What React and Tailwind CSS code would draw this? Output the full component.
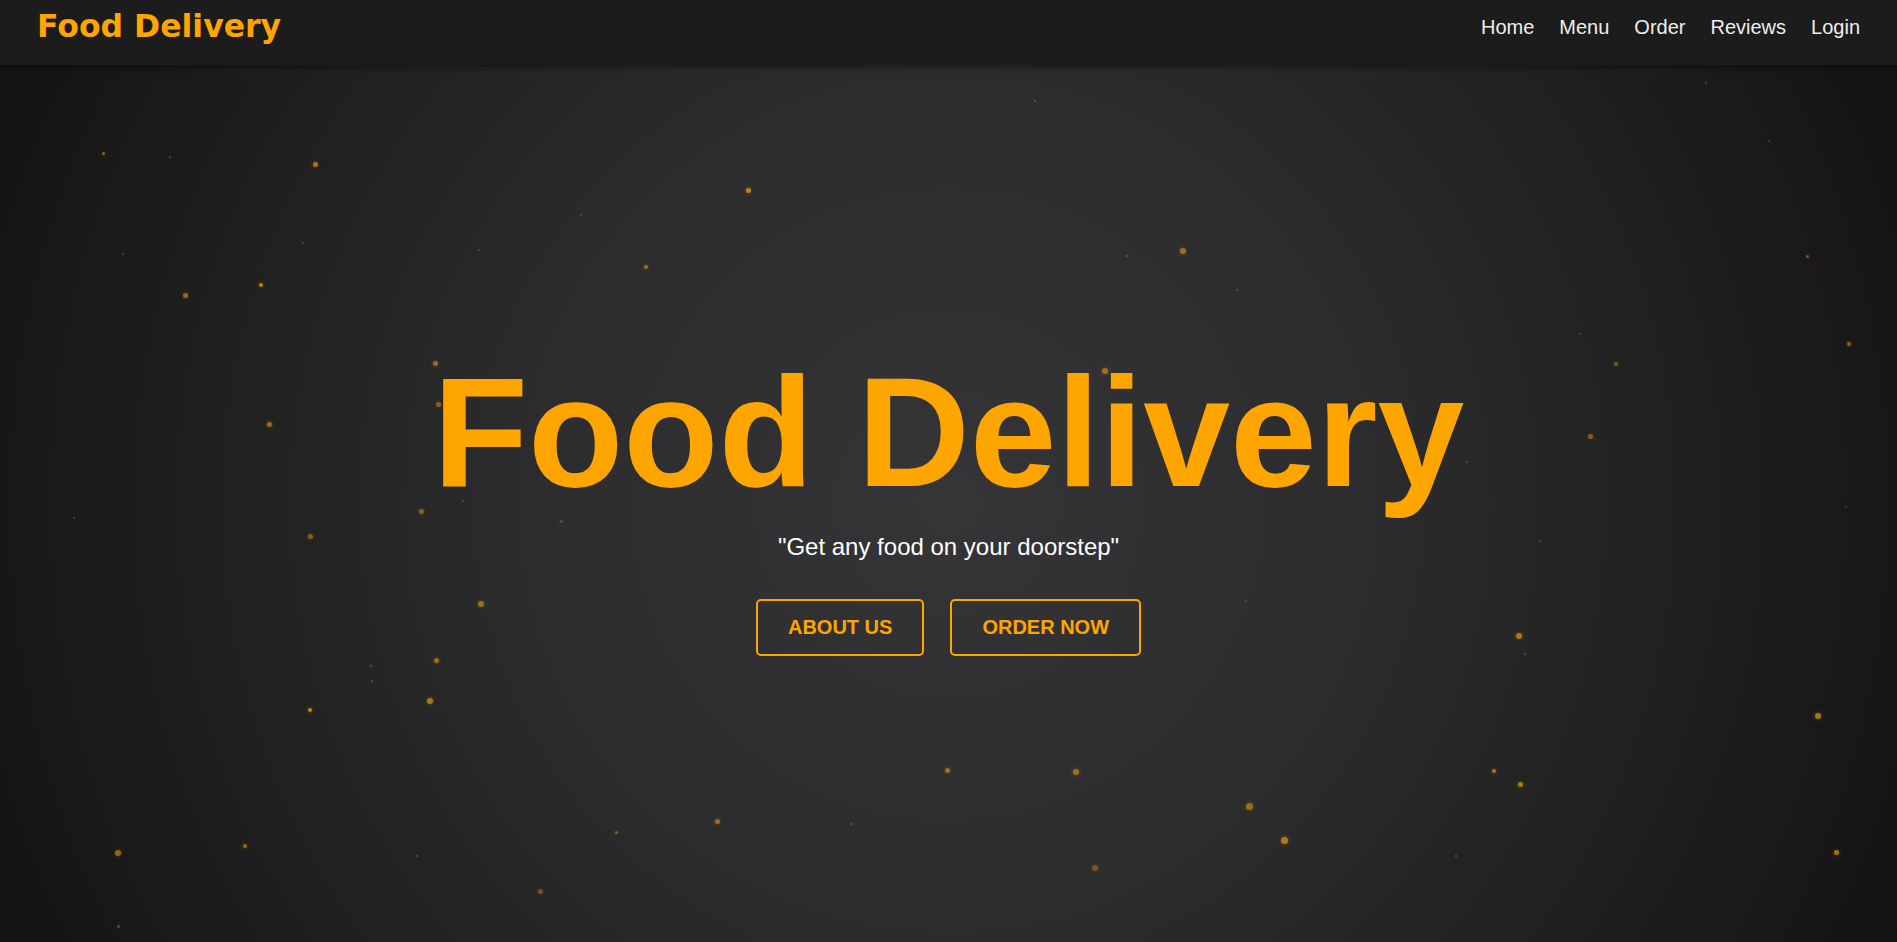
const links = ["Home", "Menu", "Order", "Reviews", "Login"];

// [x, y, size, opacity]
const dots = [
  [102, 152, 3, 0.6], [169, 156, 2, 0.4], [313, 162, 5, 0.7], [746, 188, 5, 0.8],
  [1034, 100, 2, 0.4], [580, 214, 2, 0.3], [1180, 248, 6, 0.6], [1126, 255, 2, 0.4],
  [1236, 289, 2, 0.4], [1806, 255, 3, 0.5], [1768, 140, 2, 0.3], [1705, 82, 2, 0.3],
  [259, 283, 4, 0.8], [183, 293, 5, 0.6], [122, 253, 2, 0.3], [302, 242, 2, 0.3],
  [478, 249, 2, 0.3], [644, 265, 4, 0.6], [1614, 362, 4, 0.5], [1579, 333, 2, 0.3],
  [1847, 342, 4, 0.6], [433, 361, 5, 0.6], [1102, 368, 6, 0.6], [436, 402, 5, 0.5],
  [267, 422, 5, 0.6], [1588, 434, 5, 0.5], [1466, 461, 2, 0.4], [419, 509, 5, 0.5],
  [462, 500, 2, 0.3], [560, 520, 3, 0.3], [308, 534, 5, 0.5], [73, 517, 2, 0.3],
  [1845, 506, 2, 0.3], [1539, 540, 2, 0.3], [478, 601, 6, 0.6], [1516, 633, 6, 0.7],
  [1524, 653, 2, 0.4], [1245, 600, 2, 0.3], [434, 658, 5, 0.6], [370, 665, 2, 0.4],
  [371, 680, 2, 0.4], [427, 698, 6, 0.7], [308, 708, 4, 0.8], [1815, 713, 6, 0.7],
  [945, 768, 5, 0.6], [1073, 769, 6, 0.6], [1492, 769, 4, 0.7], [1518, 782, 5, 0.7],
  [1246, 803, 7, 0.6], [1281, 837, 7, 0.7], [715, 819, 5, 0.6], [615, 831, 3, 0.5],
  [850, 823, 2, 0.4], [115, 850, 6, 0.6], [243, 844, 4, 0.6], [416, 855, 2, 0.4],
  [1092, 865, 6, 0.4], [1455, 855, 2, 0.4], [1834, 850, 5, 0.7], [538, 889, 5, 0.4],
  [117, 925, 3, 0.4],
];

export default function App() {
  return (
    <div className="h-[942px] flex flex-col bg-[#151515] overflow-hidden">
      {/* Navbar */}
      <nav className="relative z-10 h-[65px] shrink-0 flex items-center justify-between pl-[37px] pr-[37px] pb-[11px] bg-[#1c1c1c] shadow-[0_2px_6px_rgba(0,0,0,0.45)]">
        <h1 className="font-['DejaVu_Sans',Verdana,sans-serif] font-bold text-[31.5px] text-[#ffa500]">
          Food Delivery
        </h1>
        <ul className="flex items-center gap-[25px] font-['Liberation_Sans',Arial,sans-serif] text-[20px] text-[#eeeeee]">
          {links.map((l) => (
            <li key={l}>
              <a href="#">{l}</a>
            </li>
          ))}
        </ul>
      </nav>

      {/* Hero */}
      <section className="relative flex-1 flex flex-col items-center justify-center pb-[9px] bg-[radial-gradient(circle_at_center,#353538_0%,#2c2c2e_40%,#1e1e1e_75%,#131313_100%)] font-['Liberation_Sans',Arial,sans-serif]">
        {dots.map(([x, y, s, o], i) => (
          <span
            key={i}
            className="absolute rounded-full bg-[#e89a10] shadow-[0_0_4px_rgba(255,165,0,0.5)]"
            style={{ left: x, top: y - 65, width: s, height: s, opacity: o }}
          />
        ))}

        <h2 className="relative font-bold text-[156px] leading-[180px] text-[#ffa500]">
          Food Delivery
        </h2>
        <p className="relative mt-[11px] text-[24px] leading-[28px] text-white">
          "Get any food on your doorstep"
        </p>
        <div className="relative mt-[38px] flex gap-[26px]">
          <button className="px-[30px] py-[15px] border-2 border-[#ffa500] rounded-[5px] text-[#ffa500] text-[20px] leading-[23px] font-bold">
            ABOUT US
          </button>
          <button className="px-[30px] py-[15px] border-2 border-[#ffa500] rounded-[5px] text-[#ffa500] text-[20px] leading-[23px] font-bold">
            ORDER NOW
          </button>
        </div>
      </section>
    </div>
  );
}
